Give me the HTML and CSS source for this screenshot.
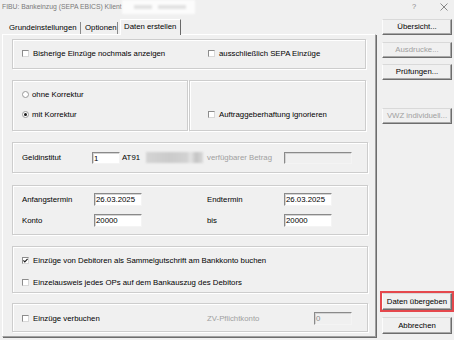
FILE: index.html
```html
<!DOCTYPE html>
<html lang="de">
<head>
<meta charset="utf-8">
<title>FIBU: Bankeinzug</title>
<link rel="stylesheet" href="styles.css">
</head>
<body>
<div class="window">
  <div class="titlebar">
    <span class="title">FIBU: Bankeinzug (SEPA EBICS) Klient</span>
    <span class="title-blur"><span class="blob b1"></span><span class="blob b2"></span></span>
    <span class="spacer"></span>
    <span class="title-help">?</span>
    <span class="title-close"><svg width="8" height="8" viewBox="0 0 8 8"><path d="M0.5 0.5 L7.5 7.5 M7.5 0.5 L0.5 7.5" stroke="#7a7a7a" stroke-width="0.9" fill="none"/></svg></span>
  </div>
  <div class="main">
    <div class="tabctl">
      <div class="tabs">
        <div class="tab tab-1">Grundeinstellungen</div>
        <div class="tab tab-2">Optionen</div>
        <div class="tab tab-active">Daten erstellen</div>
      </div>
      <div class="panel">
        <div class="group g1">
          <div class="chk col-a"><span class="box"></span>Bisherige Einzüge nochmals anzeigen</div>
          <div class="chk"><span class="box"></span>ausschließlich SEPA Einzüge</div>
        </div>
        <div class="row2">
          <div class="group g2a">
            <div class="radio"><span class="circle"></span>ohne Korrektur</div>
            <div class="radio"><span class="circle on"></span>mit Korrektur</div>
          </div>
          <div class="group g2b">
            <div class="chk"><span class="box"></span>Auftraggeberhaftung ignorieren</div>
          </div>
        </div>
        <div class="group g3">
          <span class="lbl-geld">Geldinstitut</span>
          <span class="input in-bank">1</span>
          <span class="iban">AT91</span>
          <span class="iban-blur"></span>
          <span class="lbl-betrag disabled">verfügbarer Betrag</span>
          <span class="input input-dis in-betrag"></span>
        </div>
        <div class="group g4">
          <span class="cell">Anfangstermin</span>
          <span class="input in-date">26.03.2025</span>
          <span></span>
          <span class="cell">Endtermin</span>
          <span class="input in-date">26.03.2025</span>
          <span class="cell">Konto</span>
          <span class="input in-date">20000</span>
          <span></span>
          <span class="cell">bis</span>
          <span class="input in-date">20000</span>
        </div>
        <div class="group g5">
          <div class="chk"><span class="box"><svg width="5" height="5" viewBox="0 0 5 5"><path d="M0.4 2.4 L1.8 3.9 L4.6 0.9" stroke="#1a1a1a" stroke-width="1.1" fill="none"/></svg></span>Einzüge von Debitoren als Sammelgutschrift am Bankkonto buchen</div>
          <div class="chk"><span class="box"></span>Einzelausweis jedes OPs auf dem Bankauszug des Debitors</div>
        </div>
        <div class="group g6">
          <div class="chk col-b"><span class="box"></span>Einzüge verbuchen</div>
          <span class="lbl-zv disabled">ZV-Pflichtkonto</span>
          <span class="input input-dis in-zv">0</span>
        </div>
      </div>
    </div>
    <div class="buttons">
      <div class="btn">Übersicht...</div>
      <div class="btn btn-dis b-aus">Ausdrucke...</div>
      <div class="btn b-pruef">Prüfungen...</div>
      <div class="btn btn-dis b-vwz">VWZ individuell...</div>
      <div class="spacer"></div>
      <div class="btn btn-big btn-marked">Daten übergeben</div>
      <div class="btn btn-big b-abbr">Abbrechen</div>
    </div>
  </div>
</div>
</body>
</html>
```

FILE: styles.css
```css
* { box-sizing: border-box; }
html, body { margin: 0; padding: 0; }
body {
  width: 454px;
  height: 340px;
  overflow: hidden;
  background: #f0f0f0;
  font-family: "Liberation Sans", Arial, sans-serif;
  font-size: 7.8px;
  color: #000;
}
.window { display: flex; flex-direction: column; height: 340px; }

/* title bar */
.titlebar {
  height: 19px;
  display: flex;
  align-items: flex-start;
  padding-left: 2px;
  color: #7a7a7a;
  font-size: 6.8px;
}
.title { width: 120px; line-height: 14px; white-space: nowrap; }
.title-blur {
  width: 73px;
  height: 14px;
  background: #fcfcfc;
  display: flex;
  align-items: center;
  gap: 6px;
  padding-left: 12px;
  filter: blur(1.2px);
}
.blob { height: 4px; background: #e2e2e2; }
.b1 { width: 18px; }
.b2 { width: 28px; }
.spacer { flex: 1; }
.title-help { width: 10px; line-height: 14px; margin-right: 18px; color: #8a8a8a; font-size: 7.5px; }
.title-close { width: 14px; height: 14px; display: flex; align-items: center; margin-right: 0; }

/* main */
.main { display: flex; height: 321px; }
.tabctl { margin-left: 2px; width: 374px; display: flex; flex-direction: column; }
.tabs { height: 15px; display: flex; align-items: flex-end; }
.tab {
  height: 12px;
  line-height: 12px;
  border-right: 1px solid #8a8a8a;
  white-space: nowrap;
}
.tab-1 { width: 79px; padding-left: 7px; }
.tab-2 { width: 37px; padding-left: 4px; }
.tab-active {
  margin-left: 2px;
  width: 61px;
  height: 16px;
  line-height: 13px;
  padding-left: 3px;
  margin-bottom: -1px;
  border-top: 1px solid #fff;
  border-left: 1px solid #fff;
  border-right: 1px solid #696969;
  background: #f0f0f0;
  position: relative;
  z-index: 1;
}
.panel {
  height: 303px;
  border-top: 1px solid #fff;
  border-left: 1px solid #fff;
  border-right: 1px solid #a0a0a0;
  border-bottom: 1px solid #a0a0a0;
  box-shadow: 1px 1px 0 #6d6d6d;
  padding: 4px 0 0 9px;
  display: flex;
  flex-direction: column;
}

/* group boxes */
.group {
  border: 1px solid #cdcdcd;
  box-shadow: inset 1px 1px 0 #fff, 1px 1px 0 #fff;
  width: 356px;
  padding-left: 9px;
}
.g1 { width: 354px; height: 30px; display: flex; align-items: center; padding-bottom: 2px; }
.col-a { width: 186px; }
.row2 { display: flex; gap: 1px; margin-top: 11px; height: 51px; }
.g2a { width: 176px; height: 51px; padding-top: 7px; display: flex; flex-direction: column; gap: 8px; }
.g2b { width: 177px; height: 51px; padding-top: 27px; padding-left: 18px; }
.g3 { margin-top: 11px; height: 31px; display: flex; align-items: center; }
.g4 {
  margin-top: 12px;
  height: 50px;
  padding-top: 7px;
  display: grid;
  grid-template-columns: 72px 48px 65px 77px 48px;
  grid-auto-rows: 13px;
  row-gap: 8px;
  align-items: center;
}
.g5 { margin-top: 11px; height: 47px; padding-top: 7px; display: flex; flex-direction: column; gap: 10px; }
.g6 { margin-top: 10px; height: 29px; padding-top: 2px; display: flex; align-items: center; }

/* controls */
.chk, .radio { display: flex; align-items: center; height: 12px; white-space: nowrap; }
.box {
  width: 7px;
  height: 7px;
  margin-right: 4px;
  background: #fff;
  border: 1px solid;
  border-color: #8c8c8c #d8d8d8 #d8d8d8 #8c8c8c;
  display: flex;
  align-items: center;
  justify-content: center;
  flex: none;
}
.circle {
  width: 7px;
  height: 7px;
  margin-right: 3px;
  border-radius: 50%;
  background: #fff;
  border: 1px solid #9a9a9a;
  display: flex;
  align-items: center;
  justify-content: center;
  flex: none;
}
.circle.on::after {
  content: "";
  width: 3px;
  height: 3px;
  border-radius: 50%;
  background: #1a1a1a;
}
.input {
  display: block;
  height: 13px;
  line-height: 11px;
  padding-left: 1px;
  background: #fff;
  border: 1px solid;
  border-color: #8a8a8a #f4f4f4 #f4f4f4 #8a8a8a;
  box-shadow: inset 1px 1px 0 #d4d4d4;
  white-space: nowrap;
  overflow: hidden;
}
.input-dis { background: #f0f0f0; color: #8a8a8a; }
.in-bank { width: 28px; height: 12px; margin-right: 2px; }
.in-date { width: 48px; }
.in-betrag { width: 68px; height: 12px; }
.in-zv { width: 38px; }
.lbl-geld { width: 70px; }
.iban { width: 24px; }
.iban-blur {
  width: 57px;
  height: 11px;
  margin-right: 4px;
  background: linear-gradient(90deg, #d4d4d4 0%, #cbcbcb 40%, #d2d2d2 72%, #e4e4e4 78%, #c4c4c4 88%, #d8d8d8 100%);
  filter: blur(1.2px);
}
.lbl-betrag { width: 77px; }
.disabled { color: #a0a0a0; }
.col-b { width: 185px; }
.lbl-zv { width: 107px; }

/* buttons */
.buttons {
  width: 70px;
  margin-left: 6px;
  display: flex;
  flex-direction: column;
  padding-bottom: 6px;
}
.btn {
  height: 16px;
  line-height: 14px;
  text-align: center;
  white-space: nowrap;
  background: #f0f0f0;
  border: 1px solid;
  border-color: #d9d9d9 #6d6d6d #6d6d6d #fcfcfc;
  box-shadow: inset -1px -1px 0 #a8a8a8;
}
.btn-dis { color: #a0a0a0; }
.b-aus { margin-top: 7px; }
.b-pruef { margin-top: 6px; }
.b-vwz { margin-top: 28px; }
.btn-big { height: 17px; line-height: 15px; }
.btn-marked { outline: 2px solid #e5484d; }
.b-abbr { margin-top: 7px; }
```
